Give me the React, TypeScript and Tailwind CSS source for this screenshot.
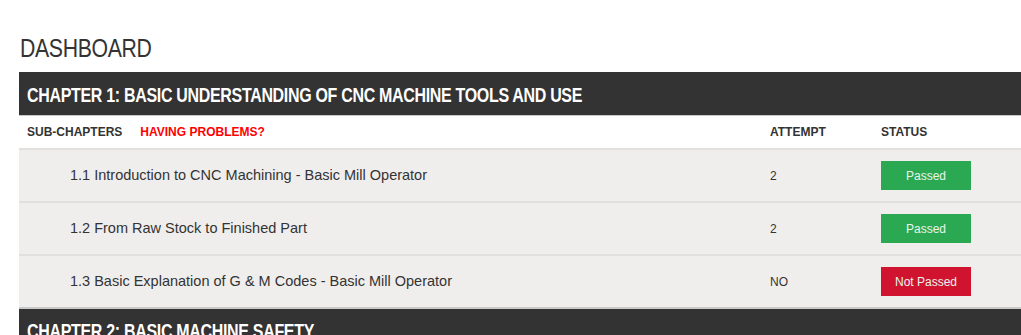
import React from "react";

const rows = [
  { title: "1.1 Introduction to CNC Machining - Basic Mill Operator", attempt: "2", passed: true },
  { title: "1.2 From Raw Stock to Finished Part", attempt: "2", passed: true },
  { title: "1.3 Basic Explanation of G & M Codes - Basic Mill Operator", attempt: "NO", passed: false },
];

export default function App() {
  return (
    <div className="h-[335px] w-[1021px] overflow-hidden bg-white" style={{ fontFamily: '"Liberation Sans", Arial, sans-serif' }}>
      <div className="pt-[33px] pl-[19px]">
        <h1 className="text-[25px] leading-[30px] font-normal text-[#333] pl-[1px] mb-[9px]">
          <span className="inline-block origin-left scale-x-[0.85] tracking-[-0.4px]">DASHBOARD</span>
        </h1>
        <div className="bg-[#333] border-b border-[#c9c9c9] h-[44px] flex items-center pl-[8px] pt-[2px]">
          <span className="inline-block whitespace-nowrap origin-left scale-x-[0.8] text-white font-bold text-[20px] tracking-[-0.4px]">CHAPTER 1: BASIC UNDERSTANDING OF CNC MACHINE TOOLS AND USE</span>
        </div>
        <div className="grid grid-cols-[751px_111px_1fr] h-[32px] items-center text-[12px] font-bold">
          <div className="pl-[8px] flex gap-[18px]">
            <span className="text-[#333]">SUB-CHAPTERS</span>
            <span className="text-[#ff0000]">HAVING PROBLEMS?</span>
          </div>
          <div className="text-[#333]">ATTEMPT</div>
          <div className="text-[#333]">STATUS</div>
        </div>
        {rows.map((r) => (
          <div key={r.title} className="grid grid-cols-[751px_111px_1fr] h-[53px] items-center bg-[#f0eeed] border-t-2 border-[#e2e0df] text-[14.5px] text-[#333]">
            <div className="pl-[51px]">{r.title}</div>
            <div className="text-[12px]">{r.attempt}</div>
            <div>
              <span
                className={`inline-flex items-center justify-center w-[90px] h-[29px] text-[12px] text-[#e8f5ec] ${
                  r.passed ? "bg-[#2aa952]" : "bg-[#d0132f]"
                }`}
              >
                {r.passed ? "Passed" : "Not Passed"}
              </span>
            </div>
          </div>
        ))}
        <div className="bg-[#333] border-t-2 border-[#c9c9c9] h-[44px] flex items-center pl-[8px] pt-[2px]">
          <span className="inline-block whitespace-nowrap origin-left scale-x-[0.8] text-white font-bold text-[20px] tracking-[-0.4px]">CHAPTER 2: BASIC MACHINE SAFETY</span>
        </div>
      </div>
    </div>
  );
}
